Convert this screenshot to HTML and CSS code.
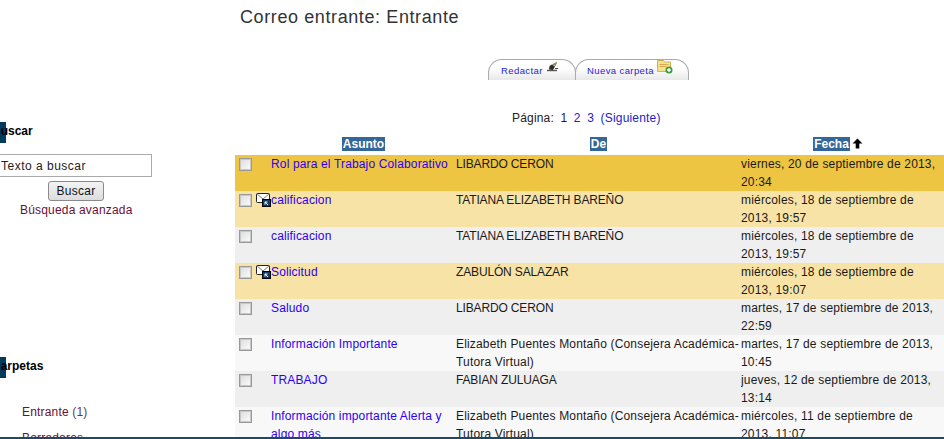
FILE: index.html
```html
<!DOCTYPE html>
<html lang="es">
<head>
<meta charset="utf-8">
<title>Correo entrante: Entrante</title>
<link rel="stylesheet" href="styles.css">
</head>
<body>
<div class="page">
  <aside class="sidebar">
    <section class="block block-search">
      <h3 class="side-heading">Buscar</h3>
      <input class="search-input" type="text" value="Texto a buscar">
      <button class="search-btn" type="button">Buscar</button>
      <a class="side-link adv" href="#">Búsqueda avanzada</a>
    </section>
    <section class="block block-folders">
      <h3 class="side-heading heading-folders">Carpetas</h3>
      <ul class="folders">
        <li><a class="side-link" href="#">Entrante <span class="count">(1)</span></a></li>
        <li><a class="side-link" href="#">Borradores</a></li>
      </ul>
    </section>
  </aside>
  <main class="main">
    <h1 class="title">Correo entrante: Entrante</h1>
    <nav class="tabs">
      <a class="tab tab-a" href="#">Redactar
        <svg class="ic-quill" width="12" height="11" viewBox="0 0 12 11"><path d="M0 9.500h10" stroke="#555" stroke-width="1.400"/><path d="M2 8.500L2.500 5 L5 3.500 L8 5.500 L6 9Z" fill="#2e2e22"/><path d="M5 3.500L10.500 0.500L8.500 5Z" fill="#8f8258"/><path d="M8 7.500h3" stroke="#444"/></svg>
      </a>
      <a class="tab tab-b" href="#">Nueva carpeta
        <svg class="ic-folder" width="16" height="14" viewBox="0 0 16 14"><path d="M0.500 0.500h6l1 1.500h6v9.500h-13z" fill="#f4e28e" stroke="#cdb45c"/><path d="M2.500 4.500h9M2.500 6.500h7" stroke="#d9ab4c"/><circle cx="12" cy="10" r="3.500" fill="#3f9a3f"/><path d="M10 10h4M12 8v4" stroke="#fff" stroke-width="1.300"/></svg>
      </a>
    </nav>
    <div class="pager">Página: <b class="cur">1</b> <a href="#">2</a> <a href="#">3</a> <a href="#">(Siguiente)</a></div>
    <table class="mail">
      <colgroup><col class="c-check"><col class="c-subj"><col class="c-from"><col class="c-date"></colgroup>
      <thead>
        <tr>
          <th></th>
          <th><a href="#">Asunto</a></th>
          <th><a href="#">De</a></th>
          <th class="th-date"><a href="#">Fecha</a><svg class="arrow" width="11" height="11" viewBox="0 0 11 11"><path d="M5.500 0.500L10.500 5.500H7.300V10.500H3.700V5.500H0.500Z" fill="#000"/></svg></th>
        </tr>
      </thead>
      <tbody>
        <tr class="r-new"><td class="chk"><span class="box"></span></td><td class="subj"><a href="#">Rol para el Trabajo Colaborativo</a></td><td class="from"><span class="caps">LIBARDO CERON</span></td><td>viernes, 20 de septiembre de 2013, 20:34</td></tr>
        <tr class="r-fwd"><td class="chk"><span class="box"></span><svg class="ic-mail" width="15" height="14" viewBox="0 0 15 14"><rect x="0.500" y="0.500" width="13" height="9" rx="1" fill="#fff" stroke="#222"/><path d="M1 1l6 5 6-5" fill="none" stroke="#777"/><rect x="6.500" y="6.500" width="8" height="7" fill="#0f3d6b" stroke="#000"/><path d="M9 9l3 3M9 9h2.500M9 9v2.500" stroke="#fff"/></svg></td><td class="subj"><a href="#">calificacion</a></td><td class="from"><span class="caps">TATIANA ELIZABETH BAREÑO</span></td><td>miércoles, 18 de septiembre de 2013, 19:57</td></tr>
        <tr class="r-odd"><td class="chk"><span class="box"></span></td><td class="subj"><a href="#">calificacion</a></td><td class="from"><span class="caps">TATIANA ELIZABETH BAREÑO</span></td><td>miércoles, 18 de septiembre de 2013, 19:57</td></tr>
        <tr class="r-fwd"><td class="chk"><span class="box"></span><svg class="ic-mail" width="15" height="14" viewBox="0 0 15 14"><rect x="0.500" y="0.500" width="13" height="9" rx="1" fill="#fff" stroke="#222"/><path d="M1 1l6 5 6-5" fill="none" stroke="#777"/><rect x="6.500" y="6.500" width="8" height="7" fill="#0f3d6b" stroke="#000"/><path d="M9 9l3 3M9 9h2.500M9 9v2.500" stroke="#fff"/></svg></td><td class="subj"><a href="#">Solicitud</a></td><td class="from"><span class="caps">ZABULÓN SALAZAR</span></td><td>miércoles, 18 de septiembre de 2013, 19:07</td></tr>
        <tr class="r-odd"><td class="chk"><span class="box"></span></td><td class="subj"><a href="#">Saludo</a></td><td class="from"><span class="caps">LIBARDO CERON</span></td><td>martes, 17 de septiembre de 2013, 22:59</td></tr>
        <tr class="r-even"><td class="chk"><span class="box"></span></td><td class="subj"><a href="#">Información Importante</a></td><td class="from">Elizabeth Puentes Montaño (Consejera Académica-Tutora Virtual)</td><td>martes, 17 de septiembre de 2013, 10:45</td></tr>
        <tr class="r-odd"><td class="chk"><span class="box"></span></td><td class="subj"><a href="#">TRABAJO</a></td><td class="from"><span class="caps">FABIAN ZULUAGA</span></td><td>jueves, 12 de septiembre de 2013, 13:14</td></tr>
        <tr class="r-even"><td class="chk"><span class="box"></span></td><td class="subj"><a href="#">Información importante Alerta y algo más</a></td><td class="from">Elizabeth Puentes Montaño (Consejera Académica-Tutora Virtual)</td><td>miércoles, 11 de septiembre de 2013, 11:07</td></tr>
      </tbody>
    </table>
  </main>
</div>
<div class="bottom-line"></div>
</body>
</html>
```
FILE: styles.css
```css
html, body { margin: 0; padding: 0; height: 439px; overflow: hidden; background: #fff; }
body { font-family: "Liberation Sans", Arial, sans-serif; font-size: 12px; letter-spacing: 0.18px; color: #1a1a1a; }
a { text-decoration: none; color: #2b00f5; }
.page { display: flex; height: 439px; overflow: hidden; }
.sidebar { width: 221px; flex: none; }
.block-search { padding-top: 122px; display: flex; flex-direction: column; height: 233px; }
.side-heading { margin: 0 0 11px; height: 21px; line-height: 19px; font-size: 12px; letter-spacing: 0; color: #000; text-indent: -8px; background: linear-gradient(#003a5c, #003a5c) no-repeat left top / 6px 100%; overflow: hidden; }
.search-input { width: 152px; height: 23px; box-sizing: border-box; border: 1px solid #aaa; border-left: 0; margin: 0 0 4px; padding: 0 0 0 1px; font: 12px "Liberation Sans", Arial, sans-serif; letter-spacing: 0.5px; color: #222; background: #fff; }
.search-btn { align-self: flex-start; margin: 0 0 0 48px; width: 56px; height: 20px; padding: 0; border: 1px solid #8a8a8a; border-radius: 3px; background: linear-gradient(#f4f4f4, #dcdcdc); font: 12px "Liberation Sans", Arial, sans-serif; letter-spacing: 0.3px; color: #111; }
.side-link { color: #6a1035; }
.adv { margin: 2px 0 0 20px; line-height: 15px; }
.block-folders { padding-top: 0; }
.heading-folders { text-indent: -8px; margin-bottom: 27px; }
.folders { list-style: none; margin: 0; padding: 0 0 0 22px; }
.folders li { height: 26px; line-height: 14px; }
.count { color: #5a3a5a; }
.main { flex: 1; min-width: 0; padding-left: 14px; }
.title { margin: 0; padding: 7px 0 0 5px; height: 52px; line-height: 21px; font-size: 18px; font-weight: normal; color: #333; letter-spacing: 0.6px; }
.tabs { display: flex; padding-left: 253px; height: 21px; }
.tab { display: block; box-sizing: border-box; height: 21px; border: 1px solid #aaa; border-bottom: 0; border-radius: 14px 14px 0 0; background: linear-gradient(#fff 40%, #e8e8e8); font-size: 9.500px; letter-spacing: 0.4px; line-height: 21px; color: #2222dd; white-space: nowrap; }
.tab-a { width: 88px; padding-left: 12px; }
.tab-b { width: 114px; padding-left: 11px; margin-left: -1px; }
.ic-quill { vertical-align: 2px; margin-left: 1px; }
.ic-folder { vertical-align: 0; margin-left: 0; }
.pager { margin-top: 31px; height: 24px; line-height: 14px; padding-left: 277px; color: #222; white-space: nowrap; word-spacing: 3px; }
.pager a { color: #2222cc; }
.cur { font-weight: normal; color: #1a1a4a; }
.mail { border-collapse: collapse; table-layout: fixed; width: 709px; margin: 0; }
.c-check { width: 36px; }
.c-subj { width: 185px; }
.c-from { width: 285px; }
.c-date { width: 203px; }
.mail th { height: 17px; padding: 0 0 3px; text-align: center; font-size: 12px; line-height: 14px; vertical-align: middle; white-space: nowrap; }
.mail th a { background: #336699; color: #fff; font-weight: bold; letter-spacing: 0; display: inline-block; padding: 0 1px; }
.mail .th-date { padding-right: 9px; }
.arrow { vertical-align: -1px; margin-left: 2px; }
.mail td { height: 36px; padding: 0; box-sizing: border-box; vertical-align: top; line-height: 18px; color: #1a1a1a; overflow: hidden; }
.mail td.from { letter-spacing: 0.17px; }
.caps { letter-spacing: -0.15px; }
.mail td.subj { letter-spacing: 0.15px; }
.mail td.chk { padding: 3px 0 0 4px; white-space: nowrap; line-height: 0; position: relative; }
.box { display: inline-block; box-sizing: border-box; width: 13px; height: 13px; border: 1px solid #999; box-shadow: inset 0 0 0 1px #c8c8c8; background: linear-gradient(135deg, #dcdcdc, #fdfdfd); vertical-align: top; }
.ic-mail { position: absolute; left: 21px; top: 2px; }
.r-new td { background: #eec443; }
.r-fwd td { background: #f7e3a5; }
.r-odd td { background: #efefef; }
.r-even td { background: #f8f8f8; }
.bottom-line { position: fixed; left: 0; right: 0; top: 437px; height: 2px; background: #1a4a6a; }
.block-search { margin-bottom: 2px; }
```
